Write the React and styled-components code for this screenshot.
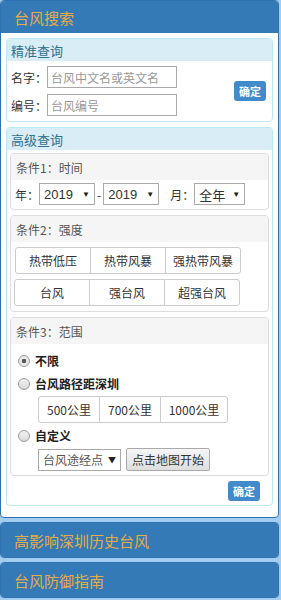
import styled, { createGlobalStyle } from "styled-components";

const GlobalStyle = createGlobalStyle`
  body {
    margin: 0;
    background: #a3cdf0;
    font-family: "Noto Sans CJK SC", "Noto Sans", sans-serif;
    font-size: 12px;
    color: #333;
  }
`;

export default function App() {
  return (
    <>
      <GlobalStyle />
      <Page>
        <Panel>
          <PanelHead>台风搜索</PanelHead>
          <PanelBody>
            <InfoBox>
              <InfoHead>精准查询</InfoHead>
              <ExactBody>
                <Fields>
                  <FieldRow>
                    <Label>名字：</Label>
                    <TextInput placeholder="台风中文名或英文名" />
                  </FieldRow>
                  <FieldRow>
                    <Label>编号：</Label>
                    <TextInput placeholder="台风编号" />
                  </FieldRow>
                </Fields>
                <OkButton>确定</OkButton>
              </ExactBody>
            </InfoBox>

            <InfoBox>
              <InfoHead>高级查询</InfoHead>
              <AdvBody>
                <CondBox>
                  <CondHead>条件1：时间</CondHead>
                  <TimeRow>
                    <Label>年：</Label>
                    <Select $w={56}>2019<Arrow>▼</Arrow></Select>
                    <Dash>-</Dash>
                    <Select $w={56}>2019<Arrow>▼</Arrow></Select>
                    <Label style={{ marginLeft: 11 }}>月：</Label>
                    <Select $w={51}>全年<Arrow>▼</Arrow></Select>
                  </TimeRow>
                </CondBox>

                <CondBox>
                  <CondHead>条件2：强度</CondHead>
                  <GroupList>
                    <BtnGroup>
                      <GroupBtn>热带低压</GroupBtn>
                      <GroupBtn>热带风暴</GroupBtn>
                      <GroupBtn>强热带风暴</GroupBtn>
                    </BtnGroup>
                    <BtnGroup $shift={-1}>
                      <GroupBtn>台风</GroupBtn>
                      <GroupBtn>强台风</GroupBtn>
                      <GroupBtn>超强台风</GroupBtn>
                    </BtnGroup>
                  </GroupList>
                </CondBox>

                <CondBox>
                  <CondHead>条件3：范围</CondHead>
                  <RangeBody>
                    <RadioRow>
                      <Radio $checked />
                      <RadioLabel>不限</RadioLabel>
                    </RadioRow>
                    <RadioRow>
                      <Radio />
                      <RadioLabel>台风路径距深圳</RadioLabel>
                    </RadioRow>
                    <Indent>
                      <BtnGroup>
                        <GroupBtn $w={62}>500公里</GroupBtn>
                        <GroupBtn $w={62}>700公里</GroupBtn>
                        <GroupBtn $w={68}>1000公里</GroupBtn>
                      </BtnGroup>
                    </Indent>
                    <RadioRow>
                      <Radio />
                      <RadioLabel>自定义</RadioLabel>
                    </RadioRow>
                    <Indent>
                      <CustomRow>
                        <Select $w={83}>台风途经点<Arrow>▼</Arrow></Select>
                        <MapButton>点击地图开始</MapButton>
                      </CustomRow>
                    </Indent>
                  </RangeBody>
                </CondBox>
                <FooterRow>
                  <OkButton>确定</OkButton>
                </FooterRow>
              </AdvBody>
            </InfoBox>
          </PanelBody>
        </Panel>

        <Panel>
          <PanelHead $tall>高影响深圳历史台风</PanelHead>
        </Panel>
        <Panel>
          <PanelHead $tall>台风防御指南</PanelHead>
        </Panel>
      </Page>
    </>
  );
}

const Page = styled.div`
  width: 279px;
  display: flex;
  flex-direction: column;
  gap: 4px;
`;

const Panel = styled.div`
  border: 1px solid #2f72b0;
  border-radius: 4px;
  background: #fff;
  overflow: hidden;
`;

const PanelHead = styled.div`
  height: ${(p) => (p.$tall ? "34px" : "32px")};
  background: #337ab7;
  color: #e9ac45;
  font-size: 15px;
  display: flex;
  align-items: center;
  padding-left: 13px;
`;

const PanelBody = styled.div`
  padding: 5px 5px 11px;
  display: flex;
  flex-direction: column;
  gap: 5px;
`;

const InfoBox = styled.div`
  border: 1px solid #bce8f1;
  border-radius: 4px;
  overflow: hidden;
`;

const InfoHead = styled.div`
  height: 22px;
  background: #d9edf7;
  color: #31708f;
  font-size: 13px;
  display: flex;
  align-items: center;
  padding-left: 4px;
`;

const ExactBody = styled.div`
  display: flex;
  align-items: center;
  justify-content: space-between;
  padding: 5px 5px 5px 4px;
`;

const Fields = styled.div`
  display: flex;
  flex-direction: column;
  gap: 6px;
`;

const FieldRow = styled.div`
  display: flex;
  align-items: center;
`;

const Label = styled.span`
  font-size: 12px;
  color: #333;
  white-space: nowrap;
`;

const TextInput = styled.input`
  width: 130px;
  height: 22px;
  box-sizing: border-box;
  border: 1px solid #a9a9a9;
  padding: 0 3px;
  font-family: inherit;
  font-size: 12px;
  color: #333;
  outline: none;

  &::placeholder {
    color: #999;
  }
`;

const OkButton = styled.button`
  height: 20px;
  padding: 0 5px;
  border: none;
  border-radius: 3px;
  background: #428bca;
  color: #fff;
  font-family: inherit;
  font-size: 11px;
  font-weight: bold;
  margin-right: 1px;
`;

const AdvBody = styled.div`
  padding: 3px 3px 4px;
  display: flex;
  flex-direction: column;
  gap: 5px;
`;

const CondBox = styled.div`
  border: 1px solid #ddd;
  border-radius: 4px;
  overflow: hidden;
`;

const CondHead = styled.div`
  height: 26px;
  background: #f5f5f5;
  color: #555;
  font-size: 12px;
  display: flex;
  align-items: center;
  padding-left: 5px;
`;

const TimeRow = styled.div`
  display: flex;
  align-items: center;
  padding: 3px 4px 4px;
`;

const Select = styled.div`
  width: ${(p) => p.$w}px;
  height: 22px;
  box-sizing: border-box;
  border: 1px solid #a9a9a9;
  display: flex;
  align-items: center;
  justify-content: space-between;
  padding: 0 4px;
  font-size: 13px;
  font-family: "Liberation Sans", "Noto Sans CJK SC", sans-serif;
  color: #333;
  background: #fff;
`;

const Arrow = styled.span`
  font-size: 8px;
  color: #222;
`;

const Dash = styled.span`
  margin: 0 2px;
  font-size: 12px;
`;

const GroupList = styled.div`
  padding: 5px 4px 5px;
  display: flex;
  flex-direction: column;
  gap: 5px;
`;

const BtnGroup = styled.div`
  display: flex;
  margin-left: ${(p) => p.$shift || 0}px;
`;

const GroupBtn = styled.div`
  width: ${(p) => p.$w || 76}px;
  height: 27px;
  box-sizing: border-box;
  border: 1px solid #ccc;
  margin-left: -1px;
  display: flex;
  align-items: center;
  justify-content: center;
  font-size: 12px;
  color: #333;
  background: #fff;

  &:first-child {
    margin-left: 0;
    border-radius: 3px 0 0 3px;
  }
  &:last-child {
    border-radius: 0 3px 3px 0;
  }
`;

const RangeBody = styled.div`
  padding: 6px 5px 4px;
  display: flex;
  flex-direction: column;
  gap: 2px;
`;

const RadioRow = styled.div`
  display: flex;
  align-items: center;
  gap: 5px;
  height: 21px;
`;

const Radio = styled.span`
  width: 10px;
  height: 10px;
  border-radius: 50%;
  border: 1px solid #9a9a9a;
  background: ${(p) =>
    p.$checked
      ? "radial-gradient(circle, #555 0 2px, #e8e8e8 2.5px)"
      : "linear-gradient(#f2f2f2, #d9d9d9)"};
  margin-left: 2px;
`;

const RadioLabel = styled.span`
  font-weight: bold;
  font-size: 12px;
  color: #222;
`;

const Indent = styled.div`
  padding-left: 22px;
`;

const CustomRow = styled.div`
  display: flex;
  align-items: center;
  gap: 5px;

  ${Select} {
    font-family: "Noto Sans CJK SC", sans-serif;
    font-size: 12px;
    color: #555;
  }
`;

const MapButton = styled.button`
  height: 23px;
  box-sizing: border-box;
  border: 1px solid #aaa;
  border-radius: 2px;
  background: linear-gradient(#f6f6f6, #dedede);
  font-family: inherit;
  font-size: 12px;
  color: #333;
  padding: 0 5px;
`;

const FooterRow = styled.div`
  display: flex;
  justify-content: flex-end;
  padding: 0 8px 0 0;
`;
